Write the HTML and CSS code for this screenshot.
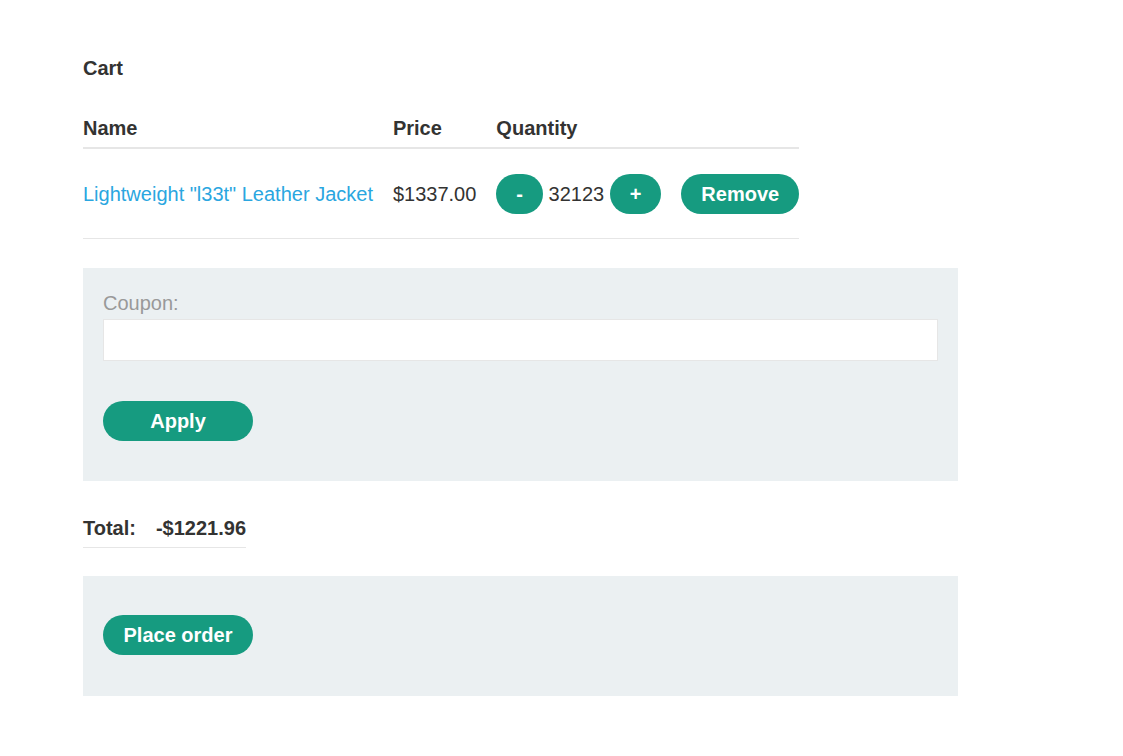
FILE: index.html
```html
<!DOCTYPE html>
<html lang="en">
<head>
<meta charset="utf-8">
<title>Cart</title>
<link rel="stylesheet" href="styles.css">
</head>
<body>
<div class="page">
  <p class="title">Cart</p>
  <table class="cart">
    <thead>
      <tr>
        <th>Name</th>
        <th>Price</th>
        <th>Quantity</th>
        <th class="last"></th>
      </tr>
    </thead>
    <tbody>
      <tr>
        <td><a class="product" href="#">Lightweight "l33t" Leather Jacket</a></td>
        <td>$1337.00</td>
        <td>
          <div class="qty">
            <button class="btn">-</button>
            <span>32123</span>
            <button class="btn">+</button>
          </div>
        </td>
        <td class="last"><button class="btn">Remove</button></td>
      </tr>
    </tbody>
  </table>

  <form class="panel coupon">
    <label class="coupon-label" for="coupon">Coupon:</label>
    <input class="coupon-input" id="coupon" type="text">
    <button class="btn btn-wide apply" type="button">Apply</button>
  </form>

  <table class="total">
    <tbody>
      <tr>
        <th>Total:</th>
        <th class="last">-$1221.96</th>
      </tr>
    </tbody>
  </table>

  <form class="panel order">
    <button class="btn btn-wide" type="button">Place order</button>
  </form>
</div>
</body>
</html>
```

FILE: styles.css
```css
html, body {
  margin: 0;
  padding: 0;
  background: #ffffff;
}

body {
  font-family: "Liberation Sans", Arial, sans-serif;
  font-size: 20px;
  line-height: 23px;
  color: #333332;
}

.page {
  margin-left: 83px;
  width: 875px;
  padding-top: 57px;
}

.title {
  margin: 0;
  font-weight: bold;
}

.cart {
  margin-top: 37px;
  border-collapse: collapse;
}

.cart th {
  text-align: left;
  font-weight: bold;
  padding: 0 20px 7px 0;
  border-bottom: 2px solid #e6e6e6;
}

.cart td {
  padding: 25px 20px 24px 0;
  line-height: 40px;
  border-bottom: 1px solid #e6e6e6;
  vertical-align: middle;
  white-space: nowrap;
}

.cart .last {
  padding-right: 0;
}

.product {
  color: #2aa6e0;
  text-decoration: none;
}

.qty {
  display: flex;
  align-items: center;
  gap: 5.5px;
}

.btn {
  display: block;
  height: 40px;
  padding: 0 20px;
  border: none;
  border-radius: 20px;
  background: #169b80;
  color: #ffffff;
  font-family: "Liberation Sans", Arial, sans-serif;
  font-size: 20px;
  font-weight: bold;
  line-height: 40px;
  cursor: pointer;
}

.btn-wide {
  min-width: 150px;
}

.panel {
  margin: 0;
  background: #ebf0f2;
}

.coupon {
  margin-top: 29px;
  padding: 24px 20px 40px;
}

.coupon-label {
  display: block;
  color: #999999;
  margin-bottom: 4px;
}

.coupon-input {
  display: block;
  box-sizing: border-box;
  width: 100%;
  height: 42px;
  margin: 0;
  border: 1px solid #e6e6e6;
  background: #ffffff;
  font-family: "Liberation Sans", Arial, sans-serif;
  font-size: 20px;
}

.apply {
  margin-top: 40px;
}

.total {
  margin-top: 36px;
  border-collapse: collapse;
}

.total th {
  text-align: left;
  font-weight: bold;
  padding: 0 20px 7px 0;
  border-bottom: 1px solid #e6e6e6;
}

.total .last {
  padding-right: 0;
}

.order {
  margin-top: 28px;
  padding: 39px 20px 41px;
}
```
